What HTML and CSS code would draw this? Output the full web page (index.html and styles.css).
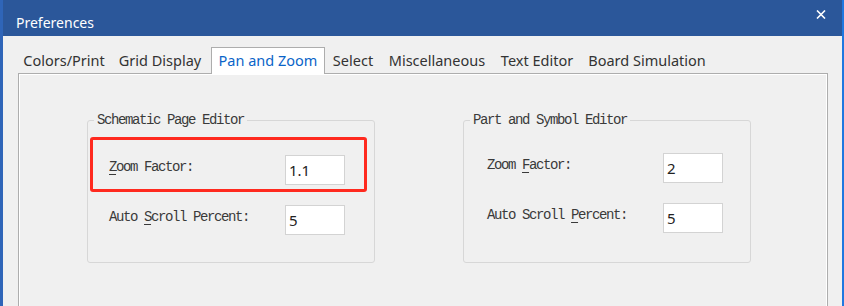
FILE: index.html
```html
<!DOCTYPE html>
<html>
<head>
    <title>Preferences</title>
    <link rel="stylesheet" href="styles.css">
</head>
<body>
    <div class="window">
        <div class="titlebar">
            <span class="title">Preferences</span>
            <svg class="close" width="10" height="9" viewBox="0 0 10 9">
                <path d="M1 0.5 L9 8.5 M9 0.5 L1 8.5" stroke="#fff" stroke-width="1.6" fill="none"/>
            </svg>
        </div>
        <div class="tabs">
            <div class="tab tab-colors">Colors/Print</div>
            <div class="tab tab-grid">Grid Display</div>
            <div class="tab tab-active">Pan and Zoom</div>
            <div class="tab tab-select">Select</div>
            <div class="tab tab-misc">Miscellaneous</div>
            <div class="tab tab-text">Text Editor</div>
            <div class="tab tab-board">Board Simulation</div>
        </div>
        <div class="panel">
            <fieldset class="group">
                <legend>Schematic Page Editor</legend>
                <div class="group-body body-schematic">
                    <div class="row">
                        <label for="zoomSch"><u>Z</u>oom Factor:</label>
                        <input type="text" id="zoomSch" value="1.1">
                    </div>
                    <div class="row">
                        <label for="scrollSch">Auto <u>S</u>croll Percent:</label>
                        <input type="text" id="scrollSch" value="5">
                    </div>
                    <div class="highlight"></div>
                </div>
            </fieldset>
            <fieldset class="group">
                <legend>Part and Symbol Editor</legend>
                <div class="group-body body-part">
                    <div class="row">
                        <label for="zoomPart">Zoom <u>F</u>actor:</label>
                        <input type="text" id="zoomPart" value="2">
                    </div>
                    <div class="row">
                        <label for="scrollPart">Auto Scroll <u>P</u>ercent:</label>
                        <input type="text" id="scrollPart" value="5">
                    </div>
                </div>
            </fieldset>
        </div>
    </div>
</body>
</html>
```

FILE: styles.css
```css
body {
    margin: 0;
    width: 844px;
    height: 306px;
    overflow: hidden;
    background: #fff;
    font-family: "Noto Sans", "Open Sans", sans-serif;
}
.window {
    height: 306px;
    background: #f0f0f0;
    border-left: 3px solid #2f65b8;
    border-right: 2px solid #1f78e0;
    overflow: hidden;
}
.titlebar {
    height: 36px;
    background: #2b579a;
    display: flex;
    justify-content: space-between;
    align-items: flex-start;
    margin: 0 -2px 0 -3px;
    padding: 0 18px 0 16px;
}
.title {
    color: #fff;
    font-size: 14px;
    line-height: 20px;
    margin-top: 13px;
}
.close {
    margin-top: 10px;
}
.tabs {
    display: flex;
    align-items: flex-end;
    height: 25px;
    margin-top: 12px;
    padding-left: 13px;
}
.tab {
    height: 25px;
    line-height: 25px;
    font-size: 14.5px;
    color: #333;
    text-align: center;
    white-space: nowrap;
}
.tab-colors { width: 96px; }
.tab-grid { width: 96px; }
.tab-select { width: 56px; }
.tab-misc { width: 112px; }
.tab-text { width: 88px; }
.tab-board { width: 132px; }
.tab-active {
    position: relative;
    z-index: 1;
    width: 112px;
    height: 26px;
    margin-left: 3px;
    margin-bottom: -1px;
    background: #fff;
    border: 1px solid #adadad;
    border-bottom: none;
    color: #0a64c8;
}
.panel {
    height: 260px;
    margin: 0 14px 0 15px;
    border: 1px solid #adadad;
    box-shadow: inset 1px 1px 0 #fff, inset -1px 0 0 #fff;
    display: flex;
    align-items: flex-start;
    gap: 88px;
    padding: 39px 0 0 68px;
}
.group {
    margin: 0;
    width: 288px;
    height: 150px;
    box-sizing: border-box;
    border: 1px solid #d7d7d7;
    border-radius: 3px;
    padding: 0;
    font-family: "Liberation Mono", monospace;
    font-size: 14px;
    letter-spacing: -1.4px;
    color: #3a3a3a;
}
.group legend {
    margin-left: 6px;
    padding: 0 3px;
    line-height: 14px;
}
.group-body {
    position: relative;
}
.body-schematic {
    padding: 28px 0 0 21px;
}
.body-part {
    padding: 26px 0 0 23px;
}
.row {
    display: flex;
    align-items: flex-start;
    margin-bottom: 20px;
}
.row label {
    width: 176px;
    padding-top: 5px;
    line-height: 14px;
}
.row u {
    text-underline-offset: 3px;
}
.row input {
    width: 60px;
    height: 30px;
    box-sizing: border-box;
    margin: 0;
    border: 1px solid #d3d3d3;
    background: #fff;
    padding: 0 3px;
    font-family: "Noto Sans", "Open Sans", sans-serif;
    font-size: 15px;
    letter-spacing: 0;
    color: #222;
    outline: none;
}
.highlight {
    position: absolute;
    left: 2px;
    top: 10px;
    width: 277px;
    height: 55px;
    box-sizing: border-box;
    border: 3px solid #ff2a1f;
    border-radius: 3px;
    pointer-events: none;
}
```
